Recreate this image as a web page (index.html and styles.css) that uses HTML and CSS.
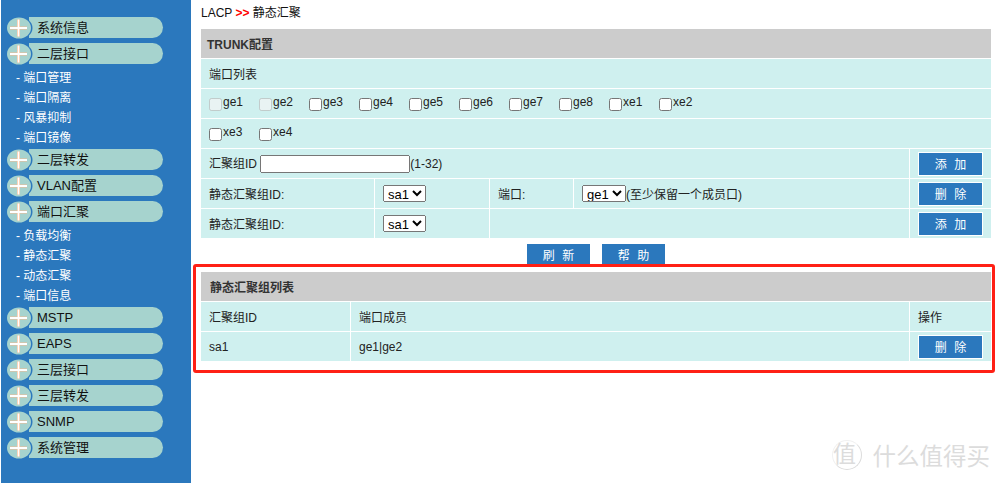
FILE: index.html
```html
<!DOCTYPE html>
<html lang="zh-CN">
<head>
    <meta charset="UTF-8">
    <title>LACP</title>
    <link rel="stylesheet" href="styles.css">
</head>
<body>

<div class="sidebar">
    <div class="menu-head"><svg class="plus" viewBox="0 0 26 22"><use href="#plus"/></svg><span class="menu-title">系统信息</span></div>
    <div class="menu-head"><svg class="plus" viewBox="0 0 26 22"><use href="#plus"/></svg><span class="menu-title">二层接口</span></div>
    <ul class="submenu">
        <li>- 端口管理</li>
        <li>- 端口隔离</li>
        <li>- 风暴抑制</li>
        <li>- 端口镜像</li>
    </ul>
    <div class="menu-head"><svg class="plus" viewBox="0 0 26 22"><use href="#plus"/></svg><span class="menu-title">二层转发</span></div>
    <div class="menu-head"><svg class="plus" viewBox="0 0 26 22"><use href="#plus"/></svg><span class="menu-title">VLAN配置</span></div>
    <div class="menu-head"><svg class="plus" viewBox="0 0 26 22"><use href="#plus"/></svg><span class="menu-title">端口汇聚</span></div>
    <ul class="submenu">
        <li>- 负载均衡</li>
        <li>- 静态汇聚</li>
        <li>- 动态汇聚</li>
        <li>- 端口信息</li>
    </ul>
    <div class="menu-head"><svg class="plus" viewBox="0 0 26 22"><use href="#plus"/></svg><span class="menu-title">MSTP</span></div>
    <div class="menu-head"><svg class="plus" viewBox="0 0 26 22"><use href="#plus"/></svg><span class="menu-title">EAPS</span></div>
    <div class="menu-head"><svg class="plus" viewBox="0 0 26 22"><use href="#plus"/></svg><span class="menu-title">三层接口</span></div>
    <div class="menu-head"><svg class="plus" viewBox="0 0 26 22"><use href="#plus"/></svg><span class="menu-title">三层转发</span></div>
    <div class="menu-head"><svg class="plus" viewBox="0 0 26 22"><use href="#plus"/></svg><span class="menu-title">SNMP</span></div>
    <div class="menu-head"><svg class="plus" viewBox="0 0 26 22"><use href="#plus"/></svg><span class="menu-title">系统管理</span></div>
</div>

<div class="main">
    <div class="crumb">LACP <b>&gt;&gt;</b> 静态汇聚</div>

    <table class="grid">
        <colgroup>
            <col class="col-a"><col class="col-b"><col class="col-c"><col><col class="col-op">
        </colgroup>
        <tr><th colspan="5">TRUNK配置</th></tr>
        <tr><td colspan="5">端口列表</td></tr>
        <tr>
            <td colspan="5">
                <div class="ports">
                    <label class="port"><input type="checkbox" disabled>ge1</label>
                    <label class="port"><input type="checkbox" disabled>ge2</label>
                    <label class="port"><input type="checkbox">ge3</label>
                    <label class="port"><input type="checkbox">ge4</label>
                    <label class="port"><input type="checkbox">ge5</label>
                    <label class="port"><input type="checkbox">ge6</label>
                    <label class="port"><input type="checkbox">ge7</label>
                    <label class="port"><input type="checkbox">ge8</label>
                    <label class="port"><input type="checkbox">xe1</label>
                    <label class="port"><input type="checkbox">xe2</label>
                </div>
            </td>
        </tr>
        <tr>
            <td colspan="5">
                <div class="ports">
                    <label class="port"><input type="checkbox">xe3</label>
                    <label class="port"><input type="checkbox">xe4</label>
                </div>
            </td>
        </tr>
        <tr>
            <td colspan="4">汇聚组ID <input type="text" class="id-input">(1-32)</td>
            <td class="op"><button class="btn">添 加</button></td>
        </tr>
        <tr>
            <td>静态汇聚组ID:</td>
            <td><select><option>sa1</option></select></td>
            <td>端口:</td>
            <td><select><option>ge1</option></select>(至少保留一个成员口)</td>
            <td class="op"><button class="btn">删 除</button></td>
        </tr>
        <tr>
            <td>静态汇聚组ID:</td>
            <td><select><option>sa1</option></select></td>
            <td colspan="2"></td>
            <td class="op"><button class="btn">添 加</button></td>
        </tr>
    </table>

    <div class="actions">
        <button class="btn-plain">刷 新</button>
        <button class="btn-plain">帮 助</button>
    </div>

    <div class="marked">
        <table class="grid">
            <colgroup>
                <col class="col-id"><col><col class="col-op">
            </colgroup>
            <tr><th colspan="3" class="th-list">静态汇聚组列表</th></tr>
            <tr><td>汇聚组ID</td><td>端口成员</td><td>操作</td></tr>
            <tr><td>sa1</td><td>ge1|ge2</td><td class="op"><button class="btn">删 除</button></td></tr>
        </table>
    </div>
</div>

<!-- watermark -->
<div class="watermark"><span class="wm-logo">值</span>什么值得买</div>

<svg class="defs" width="0" height="0">
    <symbol id="plus" viewBox="0 0 26 22">
        <ellipse cx="12.5" cy="11" rx="13" ry="11" fill="#2b78bd"/>
        <ellipse cx="12" cy="11" rx="12" ry="10.5" fill="#a6d3ce"/>
        <path d="M3 11H20M11.5 2.5V19.5" stroke="#f6b98f" stroke-width="3"/>
        <path d="M3 11H20M11.5 2.5V19.5" stroke="#fff" stroke-width="1.8"/>
    </symbol>
</svg>

</body>
</html>
```

FILE: styles.css
```css
html, body {
    height: 100%;
}

body {
    margin: 0;
    display: flex;
    overflow: hidden;
    font-family: "Liberation Sans", "Noto Sans CJK SC", sans-serif;
    font-size: 12px;
    color: #222;
    background-color: white;
}

.sidebar {
    width: 190px;
    margin-left: 1px;
    padding: 17px 0 0 6px;
    box-sizing: border-box;
    flex-shrink: 0;
    background-color: #2b78bd;
}

.menu-head {
    display: flex;
    align-items: center;
    height: 21px;
    margin-bottom: 5px;
}

.plus {
    width: 26px;
    height: 22px;
    margin-right: -4px;
    flex-shrink: 0;
    position: relative;
    z-index: 1;
}

.menu-title {
    width: 134px;
    height: 21px;
    line-height: 22px;
    padding-left: 8px;
    box-sizing: border-box;
    font-size: 13px;
    color: #111;
    background-color: #a6d3ce;
    border-radius: 0 11px 11px 0;
}

.submenu {
    list-style: none;
    margin: -1px 0 1px;
    padding: 0 0 0 9px;
    color: white;
}

.submenu li {
    height: 20px;
    line-height: 20px;
}

.main {
    flex: 1;
    padding-left: 2px;
}

.crumb {
    height: 28px;
    padding: 5px 0 0 8px;
    box-sizing: border-box;
    line-height: 16px;
    color: #111;
}

.crumb b {
    color: red;
}

.grid {
    width: 792px;
    margin-left: 7px;
    border-collapse: separate;
    border-spacing: 1px;
    table-layout: fixed;
}

.col-a { width: 173px; }
.col-b { width: 114px; }
.col-c { width: 83px; }
.col-op { width: 81px; }
.col-id { width: 149px; }

.grid th {
    height: 29px;
    padding: 0 6px;
    text-align: left;
    font-weight: bold;
    color: #333;
    background-color: #cccccc;
}

.grid .th-list {
    padding-left: 9px;
}

.grid td {
    height: 29px;
    padding: 0 8px;
    box-sizing: border-box;
    background-color: #cff0ef;
    color: #222;
}

.grid .op {
    padding: 0 0 0 8px;
}

.ports {
    display: flex;
}

.port {
    display: block;
    width: 50px;
    margin-top: -2px;
}

.port input {
    margin: 0 1px 0 0;
    vertical-align: -5px;
}

.id-input {
    width: 150px;
    height: 18px;
    margin: 0;
    padding: 0 2px;
    box-sizing: border-box;
}

select {
    font-family: "Liberation Sans", sans-serif;
    font-size: 13px;
    height: 17px;
}

.btn, .btn-plain {
    border: none;
    padding: 0;
    font-family: inherit;
    font-size: 12px;
    word-spacing: 4px;
    color: white;
    background-color: #2b78bd;
}

.btn {
    display: block;
    width: 65px;
    height: 24px;
    border: 1px solid white;
}

.actions {
    display: flex;
    justify-content: center;
    gap: 12px;
    width: 792px;
    margin-left: 7px;
    padding-top: 5px;
}

.btn-plain {
    width: 63px;
    height: 20px;
}

.marked {
    width: 802px;
    height: 109px;
    box-sizing: border-box;
    padding-top: 4px;
    border: 3px solid #ff2015;
    border-radius: 3px;
}

.marked .grid {
    margin-left: 4px;
}

.watermark {
    position: absolute;
    right: 10px;
    bottom: 11px;
    display: flex;
    align-items: center;
    gap: 11px;
    font-size: 23.5px;
    color: #dcdcdc;
}

.wm-logo {
    width: 30px;
    height: 30px;
    line-height: 27px;
    padding-right: 4px;
    box-sizing: border-box;
    text-align: center;
    font-size: 23px;
    border: 1px solid #dcdcdc;
    border-top-color: #f1f1f1;
    border-left-color: #f1f1f1;
    border-radius: 50%;
}

.defs {
    position: absolute;
}
```
